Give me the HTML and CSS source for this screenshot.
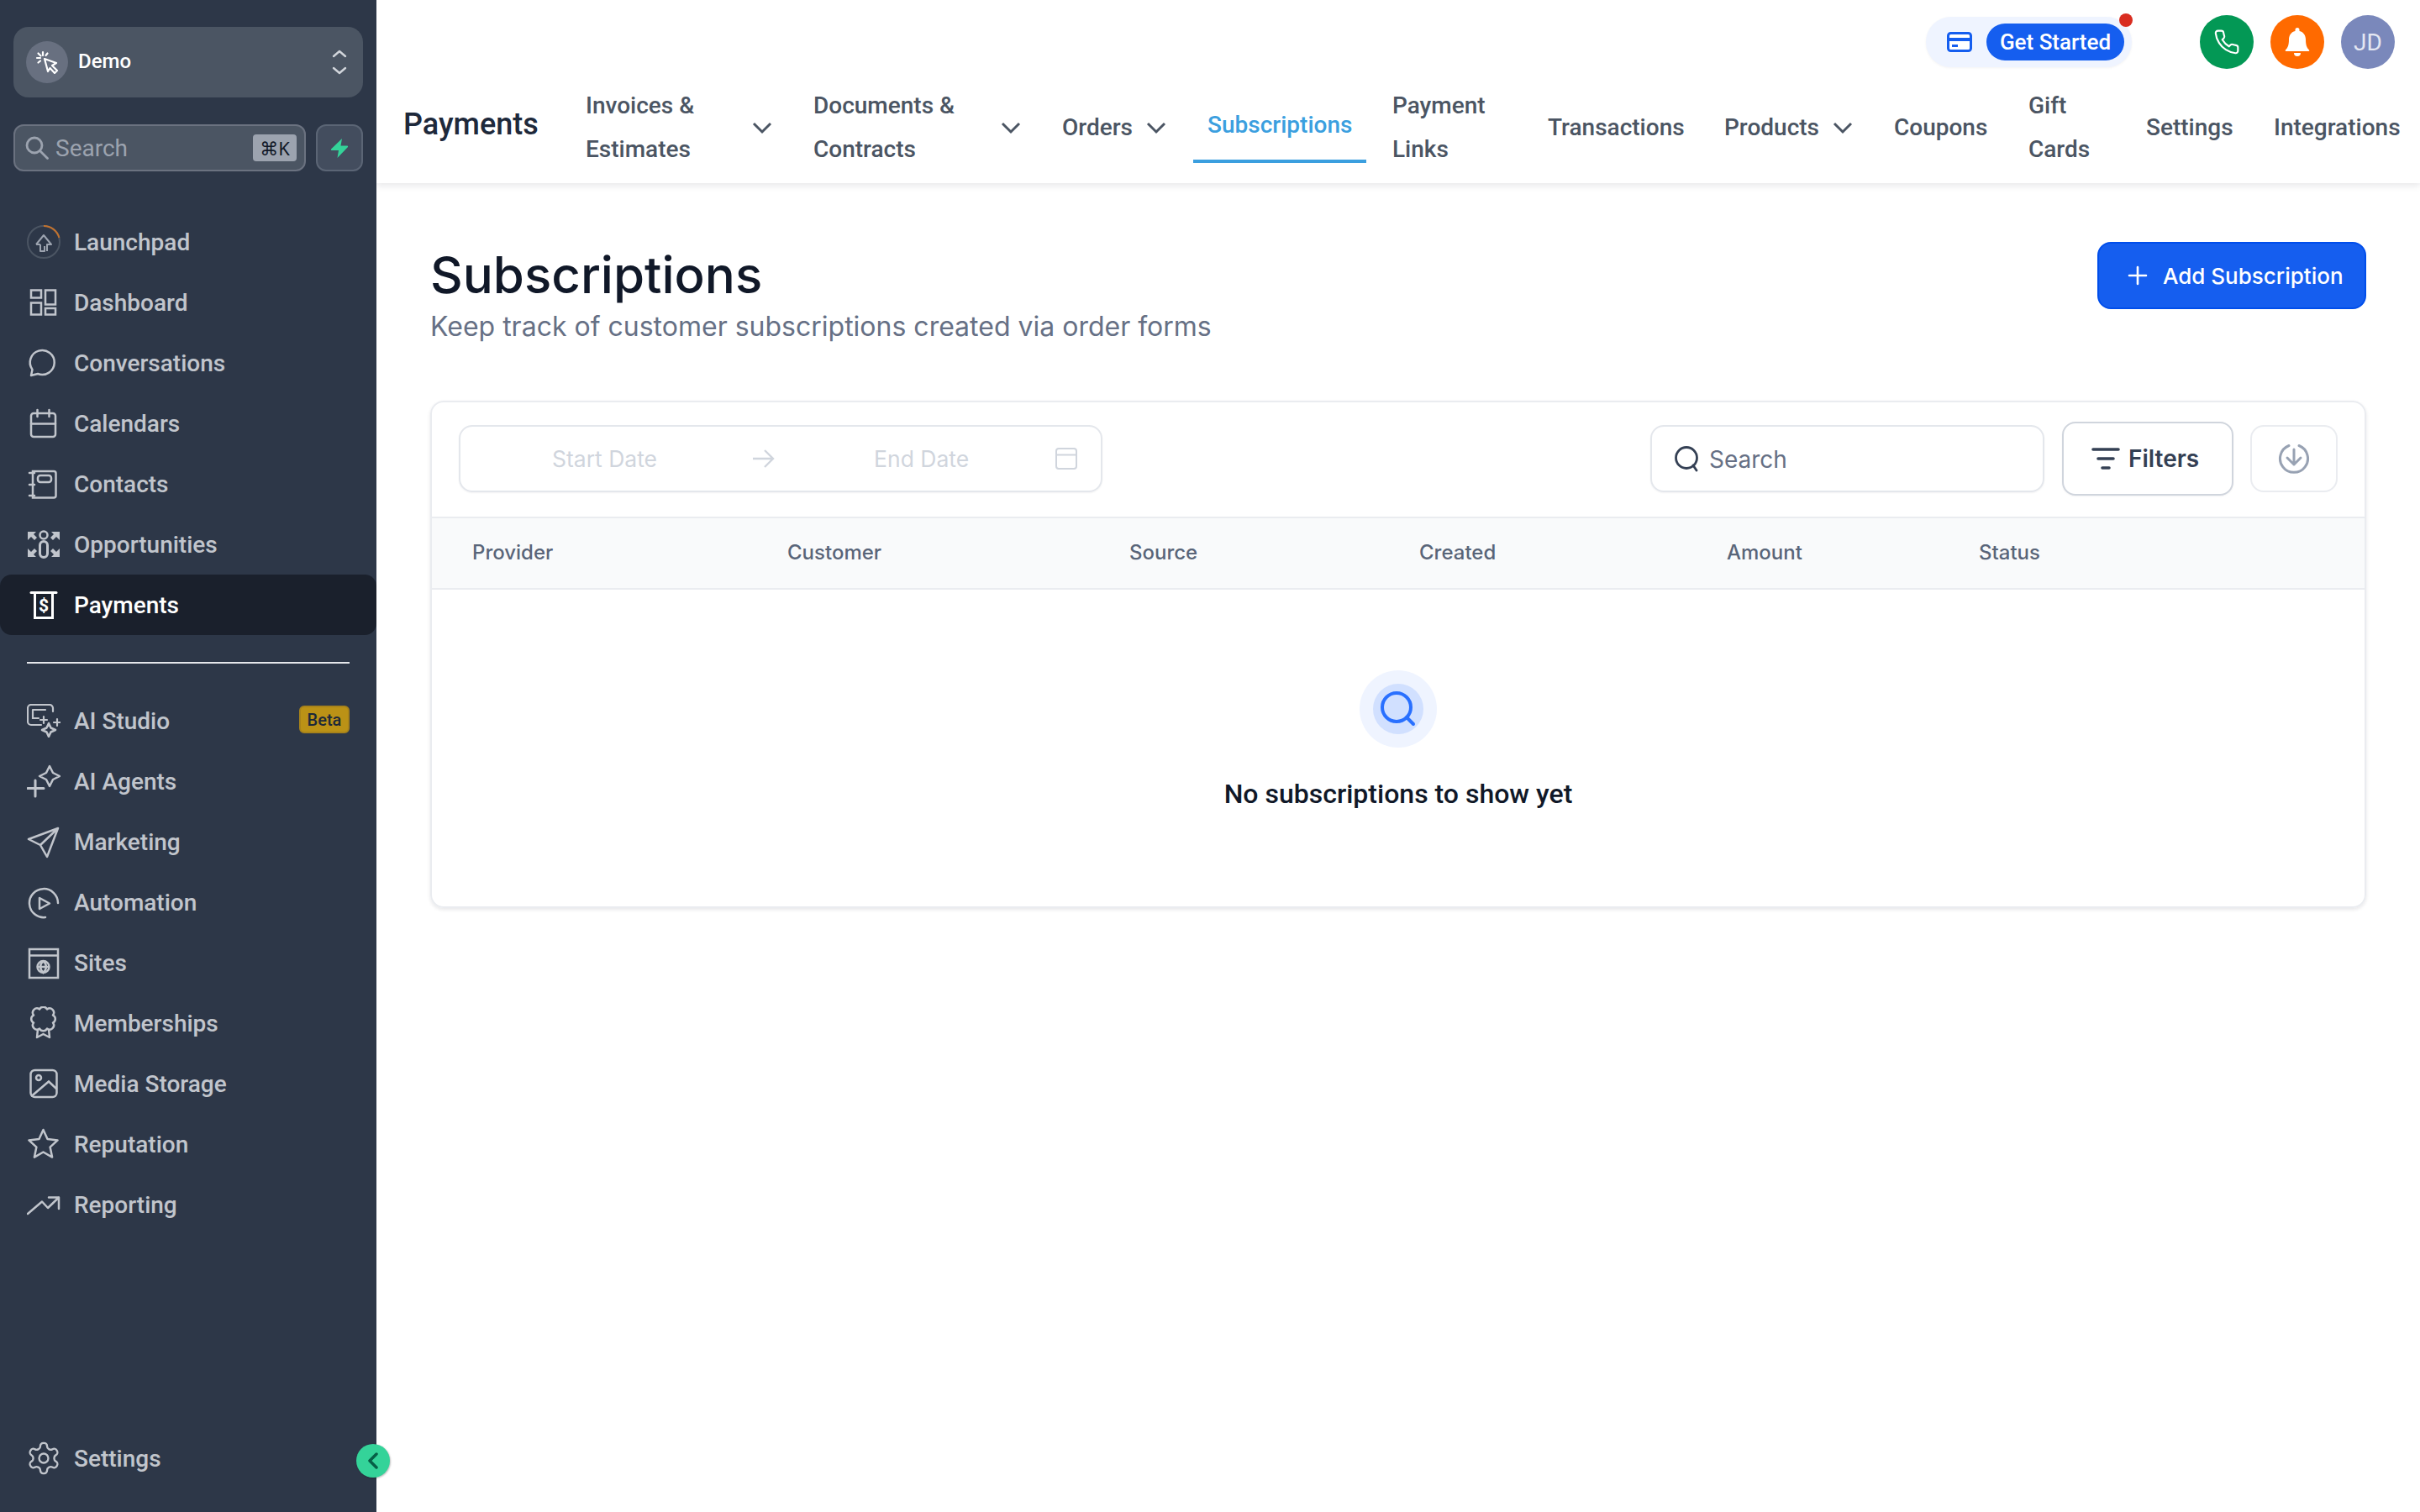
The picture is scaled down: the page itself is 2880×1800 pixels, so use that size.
FILE: index.html
```html
<!DOCTYPE html>
<html lang="en">
<head>
<meta charset="utf-8">
<title>Subscriptions</title>
<link rel="stylesheet" href="styles.css">
</head>
<body>
<div class="app">
  <aside class="sidebar">
    <div class="brand">
      <span class="brand-logo">
        <svg class="svg-white" width="28" height="28" viewBox="0 0 28 28"><path d="M11 10 L25 15 L20 18 L26 24 L23 27 L17.5 21 L15 25 Z" stroke-width="2.2" stroke-linejoin="round"/><path d="M9 2v4M2 9h4M3.5 3.5l3 3M14.5 3.5l-2 2.5M3.5 14.5l2.5-2" stroke-width="2.2" stroke-linecap="round"/></svg>
      </span>
      <span class="brand-name">Demo</span>
      <svg class="brand-arrows" width="18" height="30" viewBox="0 0 18 30"><path d="M2 8l7-6 7 6M2 22l7 6 7-6" stroke-width="2.4" stroke-linecap="round" stroke-linejoin="round"/></svg>
    </div>
    <div class="search-row">
      <div class="side-search">
        <svg class="side-search-ico" width="28" height="28" viewBox="0 0 28 28"><circle cx="11" cy="11" r="9"/><path d="M18 18l8.500 8.500" stroke-linecap="round"/></svg>
        <span class="side-search-text">Search</span>
        <kbd class="kbd">⌘K</kbd>
      </div>
      <div class="bolt-btn">
        <svg width="22" height="25" viewBox="0 0 22 25"><path d="M14 1 L12.500 9.500 L20.500 9.500 Q21.500 10 21 11 L8.500 24 L10 15 L1.500 15 Q.5 14.500 1 13.500 Z" fill="#34d399"/></svg>
      </div>
    </div>

    <nav class="side-group side-group-first">
      <a class="side-item">
        <svg class="ico" viewBox="0 0 40 40"><circle cx="20" cy="20" r="19" stroke="#4b5563" stroke-width="2"/><path d="M20 1 A19 19 0 0 1 38.400 15" stroke="#c2722e" stroke-width="2"/><path d="M11 23 L20 12 L29 23 H24 V31 M16 23 H11 M16 23 V31 H21 V25" stroke="#9ca3af" stroke-width="2" stroke-linejoin="round"/></svg>
        <span>Launchpad</span>
      </a>
      <a class="side-item">
        <svg class="ico" viewBox="0 0 40 40"><rect x="5" y="5.500" width="12" height="9"/><rect x="22" y="5.500" width="12" height="17"/><rect x="5" y="20.500" width="12" height="14"/><rect x="22" y="27" width="12" height="7.500"/></svg>
        <span>Dashboard</span>
      </a>
      <a class="side-item">
        <svg class="ico" viewBox="0 0 40 40"><path d="M5 35 L6.500 28 A14.500 14.500 0 1 1 13 33 Z" stroke-linejoin="round"/></svg>
        <span>Conversations</span>
      </a>
      <a class="side-item">
        <svg class="ico" viewBox="0 0 40 40"><rect x="5" y="8" width="29" height="28" rx="3"/><path d="M5 20.500H34M12.500 4v8M26.500 4v8" stroke-linecap="round"/></svg>
        <span>Calendars</span>
      </a>
      <a class="side-item">
        <svg class="ico" viewBox="0 0 40 40"><path d="M7 5H32a2.500 2.500 0 0 1 2.500 2.500V34a2.500 2.500 0 0 1-2.500 2.500H7Z"/><rect x="13" y="10" width="16" height="8" rx="3"/><path d="M3 7h6M3 21h6M3 34h6" stroke-linecap="round"/></svg>
        <span>Contacts</span>
      </a>
      <a class="side-item">
        <svg class="ico" viewBox="0 0 40 40"><circle cx="20" cy="9" r="4.500"/><path d="M15.500 21a4.500 4.500 0 0 1 9 0V31a4.500 4.500 0 0 1-9 0Z" stroke-width="3"/><path class="solid" d="M1 5H11L8 8L12 12L9 15L5 11L1 15Z"/><path class="solid" d="M39 5H29L32 8L28 12L31 15L35 11L39 15Z"/><path class="solid" d="M1 35H11L8 32L12 28L9 25L5 29L1 25Z"/><path class="solid" d="M39 35H29L32 32L28 28L31 25L35 29L39 25Z"/></svg>
        <span>Opportunities</span>
      </a>
      <a class="side-item side-item-active">
        <svg class="ico" viewBox="0 0 40 40"><path d="M5 5.500H35" stroke-width="3" stroke-linecap="round"/><path d="M9.500 6V35.500H30.500V6" stroke-width="3"/><text x="20" y="28" class="dollar">$</text></svg>
        <span>Payments</span>
      </a>
    </nav>

    <hr class="side-rule">

    <nav class="side-group">
      <a class="side-item">
        <svg class="ico" viewBox="0 0 40 40"><path d="M31 9V5a4 4 0 0 0-4-4H5a4 4 0 0 0-4 4V21a4 4 0 0 0 4 4H17M7 7H22M7 7V17H14M20 15v8M16 19h8M36 18v8M32 22h8" stroke-width="2.200" stroke-linecap="round"/><path d="M26 23 L28.500 28.500 L34 31 L28.500 33.500 L26 39 L23.500 33.500 L18 31 L23.500 28.500 Z" stroke-linejoin="round"/></svg>
        <span>AI Studio</span>
        <span class="beta">Beta</span>
      </a>
      <a class="side-item">
        <svg class="ico" viewBox="0 0 40 40"><path d="M27 2 L31 10 L39 14 L31 18 L27 26 L23 18 L15 14 L23 10 Z" stroke-linejoin="round"/><path d="M10 19V38M1 28.500H20" stroke-width="3" stroke-linecap="round"/></svg>
        <span>AI Agents</span>
      </a>
      <a class="side-item">
        <svg class="ico" viewBox="0 0 40 40"><path d="M37 4 L2 17 L16 24 L24 38 Z M37 4 L16 24" stroke-linejoin="round"/></svg>
        <span>Marketing</span>
      </a>
      <a class="side-item">
        <svg class="ico" viewBox="0 0 40 40"><path d="M37 21A17 17 0 1 0 22 38" stroke-linecap="round"/><path d="M15 15 L27 21.500 L15 28 Z" stroke-linejoin="round"/></svg>
        <span>Automation</span>
      </a>
      <a class="side-item">
        <svg class="ico" viewBox="0 0 40 40"><rect x="3" y="4" width="34" height="34"/><path d="M3 11.500H37M12.500 25H26.500M19.500 18C15 22 15 28 19.500 32C24 28 24 22 19.500 18"/><circle cx="19.500" cy="25" r="7"/></svg>
        <span>Sites</span>
      </a>
      <a class="side-item">
        <svg class="ico" viewBox="0 0 40 40"><path d="M15 3.500A5 5 0 0 1 24 3.500A5 5 0 0 1 31 10.500A5 5 0 0 1 31 19.500A5 5 0 0 1 24 26.500A5 5 0 0 1 15 26.500A5 5 0 0 1 8 19.500A5 5 0 0 1 8 10.500A5 5 0 0 1 15 3.500Z" stroke-linejoin="round"/><path d="M13 27L12 37L19.500 33L27 37L26 27" stroke-linejoin="round"/></svg>
        <span>Memberships</span>
      </a>
      <a class="side-item">
        <svg class="ico" viewBox="0 0 40 40"><rect x="4.500" y="4" width="31" height="32" rx="5"/><circle cx="14" cy="13" r="3"/><path d="M6 34.500 L26 17.500 L35 26" stroke-linecap="round"/></svg>
        <span>Media Storage</span>
      </a>
      <a class="side-item">
        <svg class="ico" viewBox="0 0 40 40"><path d="M19.500 3 L24.500 14.100 L36.600 15.400 L27.600 23.600 L30.100 35.600 L19.500 29.500 L8.900 35.600 L11.400 23.600 L2.400 15.400 L14.500 14.100 Z" stroke-linejoin="round"/></svg>
        <span>Reputation</span>
      </a>
      <a class="side-item">
        <svg class="ico" viewBox="0 0 40 40"><path d="M1 31 L18 16.500 L25 24 L38 11.500 M26 11.500H38V25" stroke-linejoin="round" stroke-linecap="round"/></svg>
        <span>Reporting</span>
      </a>
    </nav>

    <a class="side-item side-settings">
      <svg class="ico" viewBox="1 1 22 22"><path class="thin" d="M12.220 2h-.44a2 2 0 0 0-2 2v.18a2 2 0 0 1-1 1.730l-.43.25a2 2 0 0 1-2 0l-.15-.08a2 2 0 0 0-2.730.73l-.22.38a2 2 0 0 0 .73 2.730l.15.1a2 2 0 0 1 1 1.720v.51a2 2 0 0 1-1 1.740l-.15.09a2 2 0 0 0-.73 2.730l.22.38a2 2 0 0 0 2.730.73l.15-.08a2 2 0 0 1 2 0l.43.25a2 2 0 0 1 1 1.730V20a2 2 0 0 0 2 2h.44a2 2 0 0 0 2-2v-.18a2 2 0 0 1 1-1.730l.43-.25a2 2 0 0 1 2 0l.15.08a2 2 0 0 0 2.730-.73l.22-.39a2 2 0 0 0-.73-2.730l-.15-.08a2 2 0 0 1-1-1.740v-.5a2 2 0 0 1 1-1.740l.15-.09a2 2 0 0 0 .73-2.730l-.22-.38a2 2 0 0 0-2.730-.73l-.15.08a2 2 0 0 1-2 0l-.43-.25a2 2 0 0 1-1-1.730V4a2 2 0 0 0-2-2z"/><circle class="thin" cx="12" cy="12" r="3"/></svg>
      <span>Settings</span>
    </a>
    <button class="collapse" type="button" aria-label="Collapse">
      <svg width="14" height="20" viewBox="0 0 14 20"><path d="M11 2L3 10l8 8" stroke="#065f46" stroke-width="3.500" fill="none" stroke-linecap="round" stroke-linejoin="round"/></svg>
    </button>
  </aside>

  <main class="main">
    <header class="header">
      <div class="topbar">
        <div class="started">
          <svg width="30" height="24" viewBox="0 0 30 24"><rect x="1.500" y="1.500" width="27" height="21" rx="3" fill="#fff" stroke="#155eef" stroke-width="3"/><path d="M2 9H28" stroke="#155eef" stroke-width="4"/><path d="M6 16.500H13" stroke="#155eef" stroke-width="3"/></svg>
          <span class="started-btn">Get Started</span>
          <span class="started-dot"></span>
        </div>
        <span class="round round-phone">
          <svg class="svg-white" width="32" height="32" viewBox="0 0 24 24"><path stroke-width="1.600" d="M22 16.920v3a2 2 0 0 1-2.180 2 19.790 19.790 0 0 1-8.630-3.070 19.500 19.500 0 0 1-6-6 19.790 19.790 0 0 1-3.070-8.670A2 2 0 0 1 4.110 2h3a2 2 0 0 1 2 1.720 12.840 12.840 0 0 0 .7 2.810 2 2 0 0 1-.45 2.110L8.090 9.910a16 16 0 0 0 6 6l1.270-1.270a2 2 0 0 1 2.110-.45 12.840 12.840 0 0 0 2.810.7A2 2 0 0 1 22 16.920z"/></svg>
        </span>
        <span class="round round-bell">
          <svg width="30" height="36" viewBox="0 0 30 36"><path d="M15 1a2.500 2.500 0 0 1 2.500 2.500V5C22.500 6 25 10.500 25 15c0 6 1 9.500 4 12.500.7.700.3 1.500-.6 1.500H1.600c-.9 0-1.300-.8-.6-1.500C4 24.500 5 21 5 15c0-4.500 2.500-9 7.500-10V3.500A2.500 2.500 0 0 1 15 1z" fill="#fff"/><path d="M11 31h8a4 4 0 0 1-8 0z" fill="#fff"/></svg>
        </span>
        <span class="round round-avatar">JD</span>
      </div>
      <nav class="tabs">
        <div class="tabs-title">Payments</div>
        <a class="tab tab-invoices"><span>Invoices &amp; Estimates</span><svg class="chev" viewBox="0 0 24 16"><path d="M2 3l10 10 10-10"/></svg></a>
        <a class="tab tab-documents"><span>Documents &amp; Contracts</span><svg class="chev" viewBox="0 0 24 16"><path d="M2 3l10 10 10-10"/></svg></a>
        <a class="tab tab-orders"><span>Orders</span><svg class="chev" viewBox="0 0 24 16"><path d="M2 3l10 10 10-10"/></svg></a>
        <a class="tab tab-subs"><span>Subscriptions</span></a>
        <a class="tab tab-links"><span>Payment Links</span></a>
        <a class="tab tab-trans"><span>Transactions</span></a>
        <a class="tab tab-products"><span>Products</span><svg class="chev" viewBox="0 0 24 16"><path d="M2 3l10 10 10-10"/></svg></a>
        <a class="tab tab-coupons"><span>Coupons</span></a>
        <a class="tab tab-gift"><span>Gift Cards</span></a>
        <a class="tab tab-settings"><span>Settings</span></a>
        <a class="tab tab-integrations"><span>Integrations</span></a>
      </nav>
    </header>

    <section class="content">
      <div class="page-head">
        <div>
          <h1 class="page-title">Subscriptions</h1>
          <p class="page-sub">Keep track of customer subscriptions created via order forms</p>
        </div>
        <button class="add-btn" type="button">
          <svg width="24" height="24" viewBox="0 0 24 24"><path d="M12 2V22M2 12H22" stroke="#fff" stroke-width="2.600" stroke-linecap="round"/></svg>
          <span>Add Subscription</span>
        </button>
      </div>

      <div class="card">
        <div class="toolbar">
          <div class="dates">
            <span class="date-start">Start Date</span>
            <svg class="date-arrow" width="28" height="24" viewBox="0 0 28 24"><path d="M2 12H26M16 2L26 12L16 22" stroke="#d0d5dd" stroke-width="2.400" fill="none"/></svg>
            <span class="date-end">End Date</span>
            <svg class="date-cal" width="26" height="26" viewBox="0 0 26 26"><rect x="1" y="1" width="24" height="24" rx="3" stroke="#d0d5dd" stroke-width="2" fill="none"/><path d="M1 8.500H25" stroke="#d0d5dd" stroke-width="2"/></svg>
          </div>
          <div class="table-search">
            <svg width="30" height="32" viewBox="0 0 30 32"><circle cx="15" cy="15" r="12.500" stroke="#344054" stroke-width="2.800" fill="none"/><path d="M23 24l4 6" stroke="#344054" stroke-width="2.800" stroke-linecap="round"/></svg>
            <span class="table-search-text">Search</span>
          </div>
          <button class="filters" type="button">
            <svg width="34" height="28" viewBox="0 0 34 28"><path d="M2 3H32M8 14H26M13 25H21" stroke="#344054" stroke-width="3.600" stroke-linecap="round"/></svg>
            <span>Filters</span>
          </button>
          <button class="download" type="button" aria-label="Download">
            <svg width="38" height="38" viewBox="0 0 38 38"><path d="M25 3.500A16.500 16.500 0 1 1 13 3.500" stroke="#98a2b3" stroke-width="3" fill="none" stroke-linecap="round"/><path d="M19 8V26M11 18L19 26L27 18" stroke="#98a2b3" stroke-width="3" fill="none" stroke-linecap="round" stroke-linejoin="round"/></svg>
          </button>
        </div>
        <div class="thead">
          <span>Provider</span><span>Customer</span><span>Source</span><span>Created</span><span>Amount</span><span>Status</span>
        </div>
        <div class="empty">
          <div class="empty-outer"><div class="empty-inner">
            <svg width="44" height="44" viewBox="0 0 44 44"><circle cx="20" cy="20" r="17" stroke="#2970ff" stroke-width="4" fill="none"/><path d="M32 32l8 8" stroke="#2970ff" stroke-width="4" stroke-linecap="round"/></svg>
          </div></div>
          <p class="empty-text">No subscriptions to show yet</p>
        </div>
      </div>
    </section>
  </main>
</div>
</body>
</html>
```
FILE: styles.css
```css
* { box-sizing: border-box; }
html, body { margin: 0; padding: 0; }
body { width: 2880px; height: 1800px; overflow: hidden; background: #fff; font-family: "Roboto", "Liberation Sans", sans-serif; }
a { display: block; color: inherit; text-decoration: none; }
button { font: inherit; cursor: pointer; }
h1, p { margin: 0; }
svg { display: block; flex: none; }
.svg-white { fill: none; stroke: #fff; }

.app { display: flex; width: 2880px; height: 1800px; }

/* Sidebar */
.sidebar { position: relative; z-index: 2; flex: 0 0 448px; display: flex; flex-direction: column; height: 1800px; padding-top: 32px; background: #2d3748; }
.brand { display: flex; align-items: center; height: 84px; margin: 0 16px; padding: 0 19px 0 15px; border-radius: 18px; background: #4b5563; }
.brand-logo { display: flex; align-items: center; justify-content: center; width: 50px; height: 50px; border-radius: 50%; background: #687080; }
.brand-name { margin: -3px 0 0 12px; color: #fff; font-size: 24px; font-weight: 500; }
.brand-arrows { margin-left: auto; fill: none; stroke: #d1d5db; }

.search-row { display: flex; gap: 12px; margin: 32px 16px 0; }
.side-search { display: flex; align-items: center; flex: 1; height: 56px; padding: 0 9px 0 12px; border: 2px solid #6b7280; border-radius: 12px; background: #4b5563; }
.side-search-ico { fill: none; stroke: #9ca3af; stroke-width: 2.800; }
.side-search-text { margin-left: 8px; color: #9ca3af; font-size: 28px; }
.kbd { display: flex; align-items: center; justify-content: center; width: 52px; height: 32px; margin-left: auto; border-radius: 4px; background: #9ca3af; color: #111827; font-family: "Noto Sans", "DejaVu Sans", sans-serif; font-size: 22px; }
.bolt-btn { display: flex; align-items: center; justify-content: center; flex: 0 0 56px; height: 56px; border: 2px solid #5b6575; border-radius: 12px; background: #434d5e; }

.side-group-first { margin-top: 48px; }
.side-item { display: flex; align-items: center; gap: 16px; height: 72px; padding: 0 32px; color: #c1c5cc; font-size: 28px; font-weight: 500; }
.side-item-active { border-radius: 14px; background: #1a202c; color: #fff; }
.ico { width: 40px; height: 40px; fill: none; stroke: currentColor; stroke-width: 2.500; }
.ico .thin { stroke-width: 1.300; }
.ico .solid { fill: currentColor; stroke: none; }
.dollar { fill: currentColor; stroke: none; font-family: "Roboto", sans-serif; font-size: 21px; font-weight: 700; text-anchor: middle; }
.side-rule { flex: none; width: 384px; height: 2px; margin: 32px 32px; border: 0; background: #e5e7eb; }
.beta { display: flex; align-items: center; justify-content: center; width: 60px; height: 33px; margin: -3px 0 0 auto; border: 2px solid #a8831a; border-radius: 6px; background: #bb9216; color: #1d2939; font-size: 20px; }
.side-settings { margin-top: auto; margin-bottom: 28px; }
.collapse { position: absolute; left: 424px; top: 1719px; display: flex; align-items: center; justify-content: center; width: 40px; height: 40px; padding: 0; border: 0; border-radius: 50%; background: #34d399; box-shadow: 1px 1px 2px rgba(0,0,0,.25); }

/* Main */
.main { flex: 1; min-width: 0; display: flex; flex-direction: column; }
.header { position: relative; z-index: 1; flex: 0 0 218px; background: #fff; box-shadow: 0 3px 8px rgba(16,24,40,.1); }
.topbar { display: flex; align-items: flex-start; justify-content: flex-end; height: 100px; padding: 18px 30px 0 0; }
.started { position: relative; display: flex; align-items: center; width: 245px; height: 60px; margin: 2px 81px 0 0; padding-left: 25px; border-radius: 30px; background: #eff4ff; box-shadow: 0 1px 3px rgba(16,24,40,.05); }
.started-btn { display: flex; align-items: center; justify-content: center; width: 164px; height: 44px; margin-left: 17px; border-radius: 22px; background: #155eef; color: #fff; font-size: 26px; font-weight: 500; }
.started-dot { position: absolute; right: -1px; top: -4px; width: 16px; height: 16px; border-radius: 50%; background: #d92d20; }
.round { display: flex; align-items: center; justify-content: center; width: 64px; height: 64px; margin-right: 20px; border-radius: 50%; }
.round-phone { background: #039855; }
.round-bell { background: #ff6a00; }
.round-avatar { margin-right: 0; background: #7a88bb; color: #e4e7f2; font-size: 28px; }

.tabs { display: flex; gap: 15px; height: 104px; padding-left: 32px; color: #4b5563; font-size: 28px; font-weight: 500; line-height: 52px; }
.tabs-title { display: flex; align-items: center; flex: 0 0 185px; margin-top: -8px; color: #1e293b; font-size: 36px; }
.tab { display: flex; align-items: center; height: 104px; padding: 0 17px; }
.chev { width: 24px; height: 16px; margin-left: auto; fill: none; stroke: currentColor; stroke-width: 3; }
.tab-invoices { width: 256px; }
.tab-documents { width: 281px; }
.tab-orders { width: 158px; }
.tab-subs { width: 206px; height: 94px; padding-top: 8px; border-bottom: 4px solid #3b9fdf; color: #3b9fdf; }
.tab-links { width: 169px; margin-left: -1px; }
.tab-trans { width: 196px; margin-left: 1px; margin-right: -1px; }
.tab-products { width: 187px; }
.tab-coupons { width: 145px; }
.tab-gift { width: 125px; }
.tab-settings { width: 137px; }
.tab-integrations { width: 184px; }

/* Content */
.content { flex: 1; padding: 70px 64px 0; font-family: "Inter", "Liberation Sans", sans-serif; }
.page-head { display: flex; justify-content: space-between; align-items: flex-start; margin-bottom: 64px; }
.page-title { color: #101828; font-size: 60px; font-weight: 500; line-height: 78px; }
.page-sub { margin-top: -1px; color: #667085; font-size: 32px; line-height: 48px; }
.add-btn { display: flex; align-items: center; gap: 18px; width: 320px; height: 80px; padding: 0 0 0 34px; border: 2px solid #004eeb; border-radius: 16px; background: #155eef; color: #fff; font-size: 26px; font-weight: 500; }

.card { display: flex; flex-direction: column; height: 604px; border: 2px solid #eaecf0; border-radius: 16px; box-shadow: 0 2px 4px rgba(16,24,40,.1); }
.toolbar { display: flex; align-items: center; flex: 0 0 136px; padding: 0 32px 2px; }
.dates { display: flex; align-items: center; width: 766px; height: 80px; padding: 0 28px 0 109px; border: 2px solid #e4e7ec; border-radius: 16px; box-shadow: 0 1px 2px rgba(16,24,40,.05); color: #d0d5dd; font-size: 26.500px; }
.date-arrow { margin-left: 112px; }
.date-end { margin-left: 118px; }
.date-cal { margin-left: auto; }
.table-search { display: flex; align-items: center; gap: 12px; width: 469px; height: 80px; margin-left: auto; padding-left: 26px; border: 2px solid #e4e7ec; border-radius: 16px; box-shadow: 0 1px 2px rgba(16,24,40,.05); color: #667085; font-size: 28px; }
.table-search-text { margin-top: 2px; }
.filters { display: flex; align-items: center; gap: 10px; width: 204px; height: 88px; margin-left: 21px; padding: 0 0 0 33px; border: 2px solid #d0d5dd; border-radius: 16px; background: #fff; box-shadow: 0 1px 2px rgba(16,24,40,.05); color: #344054; font-size: 28px; font-weight: 600; }
.download { display: flex; align-items: center; justify-content: center; width: 104px; height: 80px; margin-left: 20px; padding: 0; border: 2px solid #eaecf0; border-radius: 16px; background: #fff; }

.thead { display: grid; grid-template-columns: 375px 407px 345px 366px 300px 1fr; align-items: center; flex: 0 0 87px; padding: 0 0 2px 48px; border-top: 2px solid #eaecf0; border-bottom: 2px solid #eaecf0; background: #f9fafb; color: #596579; font-size: 24px; font-weight: 500; }

.empty { display: flex; flex-direction: column; align-items: center; padding-top: 96px; }
.empty-outer { display: flex; align-items: center; justify-content: center; width: 92px; height: 92px; border-radius: 50%; background: #eff4ff; }
.empty-inner { display: flex; align-items: center; justify-content: center; width: 60px; height: 60px; border-radius: 50%; background: #d1e0ff; }
.empty-text { margin-top: 34px; color: #101828; font-family: "Roboto", sans-serif; font-size: 32px; font-weight: 500; line-height: 42px; }
```
